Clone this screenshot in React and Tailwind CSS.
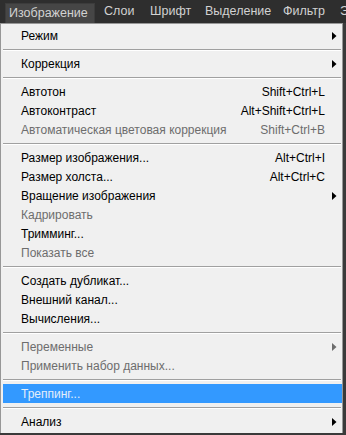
import React from "react";

const Arrow = ({ color = "#000" }) => (
  <svg width="5" height="8" viewBox="0 0 5 8" className="block">
    <path d="M0 0 L4.5 4 L0 8 Z" fill={color} />
  </svg>
);

const items = [
  { t: "Режим", sub: true },
  { sep: true },
  { t: "Коррекция", sub: true },
  { sep: true },
  { t: "Автотон", k: "Shift+Ctrl+L" },
  { t: "Автоконтраст", k: "Alt+Shift+Ctrl+L" },
  { t: "Автоматическая цветовая коррекция", k: "Shift+Ctrl+B", dis: true },
  { sep: true },
  { t: "Размер изображения...", k: "Alt+Ctrl+I" },
  { t: "Размер холста...", k: "Alt+Ctrl+C" },
  { t: "Вращение изображения", sub: true },
  { t: "Кадрировать", dis: true },
  { t: "Тримминг..." },
  { t: "Показать все", dis: true },
  { sep: true },
  { t: "Создать дубликат..." },
  { t: "Внешний канал..." },
  { t: "Вычисления..." },
  { sep: true },
  { t: "Переменные", sub: true, dis: true },
  { t: "Применить набор данных...", dis: true },
  { sep: true },
  { t: "Треппинг...", hi: true },
  { sep: true },
  { t: "Анализ", sub: true },
];

export default function App() {
  return (
    <div
      className="w-[346px] h-[435px] bg-[#3a3a3a] overflow-hidden"
      style={{ fontFamily: '"Liberation Sans", Arial, sans-serif' }}
    >
      <div className="h-[23px] bg-[#2e2e2e] flex items-center pl-[5px] text-[12.5px] text-[#d2d2d2] whitespace-nowrap">
        <div className="h-[20px] mt-[2px] pl-[3px] w-[90px] shrink-0 flex items-center bg-[#464646] border border-[#3c3c3c] border-b-0">
          Изображение
        </div>
        <div className="ml-[9px] w-[46px] shrink-0">Слои</div>
        <div className="w-[55px] shrink-0">Шрифт</div>
        <div className="w-[78px] shrink-0">Выделение</div>
        <div className="w-[57px] shrink-0">Фильтр</div>
        <div className="shrink-0">Э</div>
      </div>
      <div className="w-[343px] h-[410px] bg-[#f0f0f0] border border-[#979797] border-b-0 pt-[2px] text-[12px]">
        {items.map((it, i) =>
          it.sep ? (
            <div key={i} className="h-[9px] ml-[2px] mr-[1px] flex flex-col justify-center">
              <div className="h-px bg-[#a0a0a0]" />
              <div className="h-px bg-white" />
            </div>
          ) : (
            <div
              key={i}
              className={
                "h-[19px] flex items-center " +
                (it.hi ? "bg-[#3399ff] ml-[2px] pl-[18px] text-[#e4eefa]" : "pl-[20px] ") +
                (it.hi ? "" : it.dis ? "text-[#6d6d6d]" : "text-black")
              }
            >
              <div className="flex-1 whitespace-nowrap">{it.t}</div>
              {it.k && <div className="whitespace-nowrap">{it.k}</div>}
              <div className="w-[17px] h-full flex items-center pl-[7px]">
                {it.sub && <Arrow color={it.dis ? "#6d6d6d" : "#000"} />}
              </div>
            </div>
          )
        )}
      </div>
    </div>
  );
}
